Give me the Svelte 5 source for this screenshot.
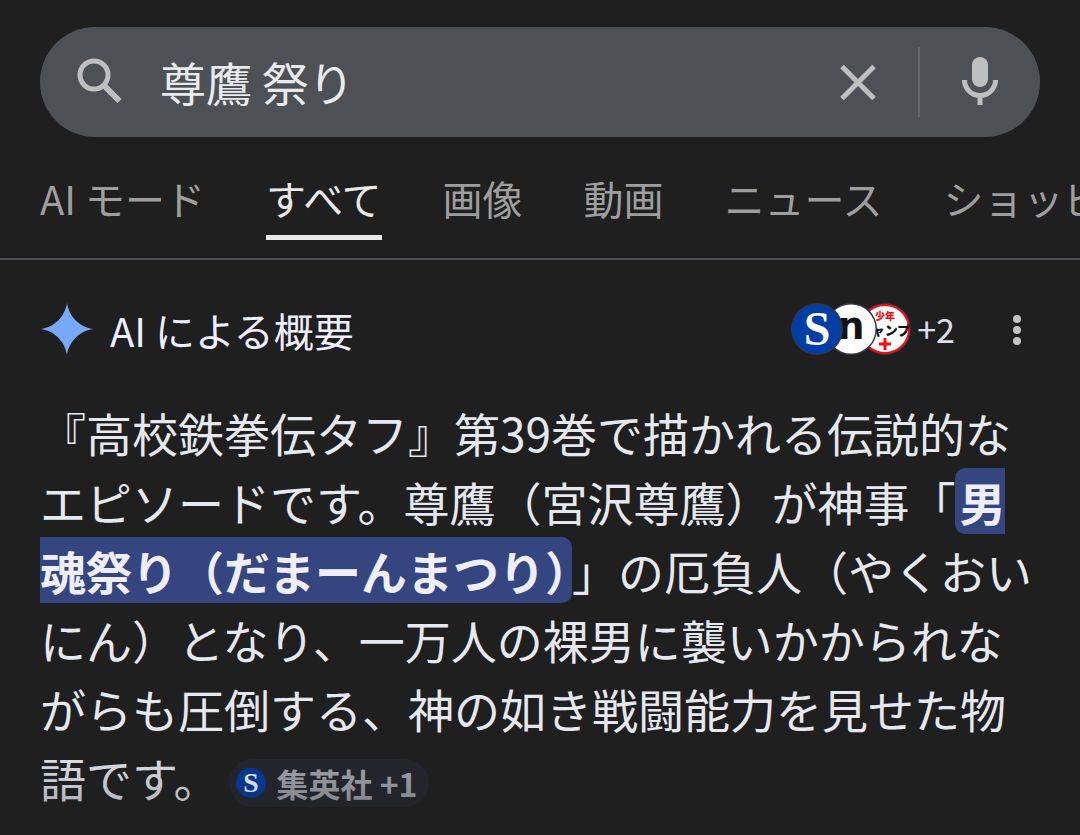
<script>
	const tabs = [
		{ label: 'AI モード' },
		{ label: 'すべて', active: true },
		{ label: '画像' },
		{ label: '動画' },
		{ label: 'ニュース' },
		{ label: 'ショッピング' },
	];

	let query = '尊鷹 祭り';
	let input;

	const clearQuery = () => {
		query = '';
		input.focus();
	};
</script>

<header>
	<form class="search" role="search" on:submit|preventDefault>
		<button class="icon-button" aria-label="検索">
			<svg width="48" height="48" viewBox="0 0 48 48">
				<circle cx="18" cy="17" r="14" stroke-width="5" />
				<path d="M28 27.5 43.5 43" stroke-width="6" />
			</svg>
		</button>
		<input bind:this={input} bind:value={query} aria-label="検索キーワード" />
		<button
			type="button"
			class="icon-button"
			aria-label="クリア"
			on:click={clearQuery}
		>
			<svg width="40" height="40" viewBox="0 0 40 40">
				<path d="M4 4.500 36 36.500M36 4.500 4 36.500" stroke-width="5" />
			</svg>
		</button>
		<span class="divider"></span>
		<button type="button" class="icon-button" aria-label="音声検索">
			<svg width="40" height="52" viewBox="0 0 40 52">
				<rect class="solid" x="12" y="1" width="16" height="30" rx="8" />
				<path d="M4.500 24a15.500 15.500 0 0 0 31 0M20 39v10" stroke-width="5" />
			</svg>
		</button>
	</form>

	<nav>
		{#each tabs as tab}
			<a href="#top" class:active={tab.active}>{tab.label}</a>
		{/each}
	</nav>
</header>

<main>
	<div class="heading">
		<svg class="spark" width="52" height="52" viewBox="0 0 52 52">
			<path
				d="M26 0C28 13 38 24 52 26C38 28 28 39 26 52C24 39 14 28 0 26C14 24 24 13 26 0Z"
			/>
		</svg>
		<h1>AI による概要</h1>
		<button class="sources" aria-label="参照元を表示">
			<svg class="source" viewBox="0 0 52 52">
				<circle class="rim" cx="26" cy="26" r="26" />
				<circle cx="26" cy="26" r="24.500" fill="#003da5" />
				<text class="serif" x="26" y="42" font-size="48">S</text>
			</svg>
			<svg class="source" viewBox="0 0 52 52">
				<circle class="rim" cx="26" cy="26" r="26" />
				<circle cx="26" cy="26" r="24.500" fill="#fff" />
				<text class="sans" x="26" y="36" font-size="38">n</text>
			</svg>
			<svg class="source" viewBox="0 0 52 52">
				<circle class="rim" cx="26" cy="26" r="26" />
				<circle cx="26" cy="26" r="24" fill="#fff" stroke="#ff0a0a" stroke-width="2" />
				<text class="red" x="26" y="17" font-size="10">少年</text>
				<text class="jump" x="32" y="32" font-size="13">ャンプ</text>
				<path d="M26 35v12M20 41h12" stroke="#ff0a0a" stroke-width="3" />
			</svg>
			<span class="more">+2</span>
		</button>
		<button class="menu" aria-label="その他のオプション">
			<svg width="12" height="34" viewBox="0 0 12 34">
				<circle cx="6" cy="7" r="4" />
				<circle cx="6" cy="18" r="4" />
				<circle cx="6" cy="29" r="4" />
			</svg>
		</button>
	</div>

	<p>
		『高校鉄拳伝タフ』第39巻で描かれる伝説的なエピソードです。尊鷹（宮沢尊鷹）が神事「<mark
			>男魂祭り（だまーんまつり）</mark
		>」の厄負人（やくおいにん）となり、一万人の裸男に襲いかかられながらも圧倒する、神の如き戦闘能力を見せた物語です。<button
			class="chip"
		>
			<svg width="30" height="30" viewBox="0 0 52 52">
				<circle cx="26" cy="26" r="26" fill="#003da5" />
				<text class="serif" x="26" y="42" font-size="48">S</text>
			</svg>
			集英社 +1
		</button>
	</p>
	<div class="fade"></div>
</main>

<style>
	:global(body) {
		background: #1f1f1f;
		color: #e6e8f0;
		font-family: 'Noto Sans CJK JP', sans-serif;
		overflow-x: hidden;
	}

	button {
		display: flex;
		align-items: center;
		padding: 0;
		border: none;
		background: none;
		color: inherit;
		font-family: inherit;
		cursor: pointer;
	}

	svg {
		display: block;
		flex-shrink: 0;
	}

	header {
		padding-top: 27px;
		border-bottom: 2px solid #4d5156;
	}

	.search {
		display: flex;
		align-items: center;
		box-sizing: border-box;
		height: 110px;
		margin: 0 40px;
		padding: 0 40px 0 36px;
		border-radius: 55px;
		background: #4d5156;
	}
	.search input {
		flex: 1;
		min-width: 0;
		margin: 0 20px 0 36px;
		padding: 0 0 2px;
		border: none;
		outline: none;
		background: none;
		color: #e8eaed;
		font-family: inherit;
		font-size: 46px;
	}
	.icon-button svg {
		fill: none;
		stroke: #bfbfbf;
	}
	.icon-button .solid {
		fill: #bfbfbf;
		stroke: none;
	}
	.divider {
		width: 2px;
		height: 70px;
		margin: 0 40px;
		background: #62666a;
	}

	nav {
		display: flex;
		gap: 61px;
		padding: 32px 0 18px 40px;
		overflow: hidden;
		white-space: nowrap;
	}
	nav a {
		padding-bottom: 8px;
		border-bottom: 5px solid transparent;
		color: #9e9e9e;
		font-size: 40px;
		line-height: 58px;
		text-decoration: none;
	}
	nav .active {
		border-color: #e8e8e8;
		color: #e8e8e8;
	}

	main {
		position: relative;
		padding: 41px 40px 24px;
	}

	.heading {
		display: flex;
		align-items: center;
		height: 56px;
		padding-left: 1px;
	}
	.spark {
		fill: #76a9fa;
	}
	h1 {
		flex: 1;
		margin: 0 0 0 17px;
		padding-top: 2px;
		color: #eeeeff;
		font-size: 40px;
		font-weight: 400;
		line-height: 56px;
	}
	.source {
		position: relative;
		width: 52px;
		height: 52px;
	}
	.source:nth-child(1) {
		z-index: 2;
	}
	.source:nth-child(2) {
		z-index: 1;
	}
	.source + .source {
		margin-left: -18px;
	}
	.rim {
		fill: #33364a;
	}
	text {
		font-weight: 700;
		text-anchor: middle;
	}
	.serif {
		fill: #fff;
		font-family: 'Liberation Serif', serif;
	}
	.sans {
		fill: #111;
		font-family: 'DejaVu Sans', sans-serif;
	}
	.red {
		fill: #ff0a0a;
		font-weight: 900;
	}
	.jump {
		fill: #111;
		font-weight: 900;
	}
	.more {
		margin-left: 6px;
		color: #dde0f5;
		font-size: 34px;
		line-height: 48px;
	}
	.menu {
		margin: 0 17px 0 56px;
		fill: #c4c4c4;
	}

	p {
		margin: 41px 0 0;
		font-size: 46px;
		line-height: 69px;
	}
	mark {
		padding: 0 4px;
		border-radius: 10px;
		background: #35457f;
		color: #eeeeff;
		font-weight: 700;
	}
	.chip {
		display: inline-flex;
		gap: 10px;
		height: 48px;
		margin: 0 0 4px 10px;
		padding: 0 12px 0 7px;
		border-radius: 24px;
		background: #25252f;
		color: #a8aab2;
		font-size: 32px;
		font-weight: 700;
		line-height: 44px;
		vertical-align: middle;
	}

	.fade {
		position: absolute;
		inset: auto 0 0;
		height: 90px;
		background: linear-gradient(rgba(31, 31, 31, 0), rgba(31, 31, 31, 0.4));
		pointer-events: none;
	}
</style>
